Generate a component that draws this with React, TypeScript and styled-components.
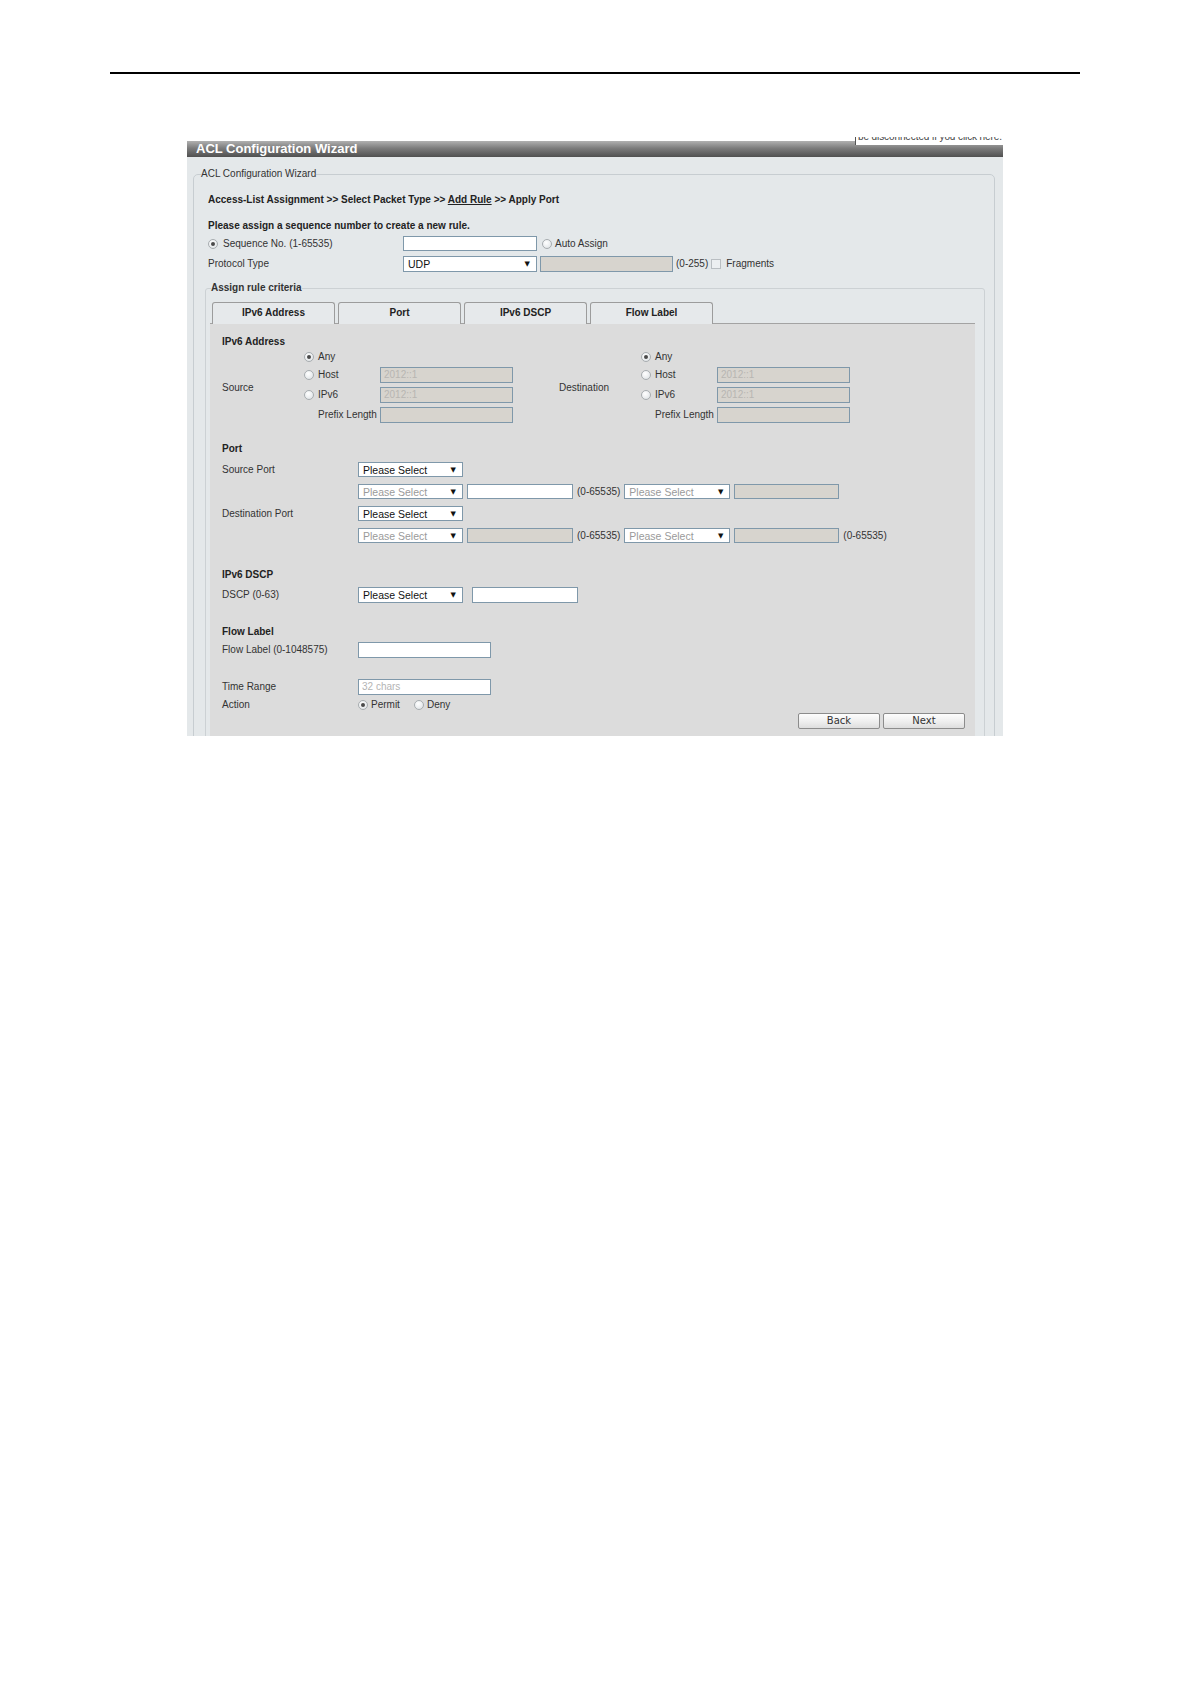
import React from "react";
import styled, { createGlobalStyle } from "styled-components";

const GlobalStyle = createGlobalStyle`
  html, body { margin: 0; padding: 0; background: #fff; }
  body { font-family: "Liberation Sans", Arial, sans-serif; color: #333; }
  * { box-sizing: border-box; }
`;

const Page = styled.div`
  width: 1191px;
  height: 1684px;
  padding-top: 72px;
  background: #fff;
  overflow: hidden;
`;

const HeaderRule = styled.div`
  margin-left: 110px;
  width: 970px;
  height: 2px;
  background: #000;
`;

const Window = styled.div`
  position: relative;
  margin: 63px 0 0 187px;
  width: 816px;
  height: 599px;
  padding-top: 4px;
  overflow: hidden;
  background: #fff;
  display: flex;
  flex-direction: column;
`;

const Note = styled.div`
  position: absolute;
  top: 0;
  right: 0;
  width: 148px;
  height: 8px;
  overflow: hidden;
  background: #fff;
  border-left: 1px solid #555;
  font-size: 10px;
  line-height: 12px;
  letter-spacing: -0.1px;
  color: #444;
  padding-left: 2px;
  white-space: nowrap;
  span { display: block; margin-top: -6px; }
`;

const TitleBar = styled.div`
  flex: none;
  height: 16px;
  padding-left: 9px;
  background: linear-gradient(to bottom, #b0b0b0 0%, #7c7c7c 45%, #505050 100%);
  color: #fff;
  font-weight: bold;
  font-size: 13px;
  line-height: 16px;
  white-space: nowrap;
`;

const Body = styled.div`
  flex: 1;
  min-height: 0;
  background: #e4e8ea;
  padding: 10px 8px 0 6px;
`;

const OuterFieldset = styled.fieldset`
  margin: 0;
  min-width: 0;
  height: 700px;
  border: 1px solid #c7cdd1;
  border-radius: 5px;
  padding: 0 9px 0 7px;
`;

const Legend = styled.legend<{ $indent?: number }>`
  margin: 0 0 0 ${(p) => p.$indent ?? 0}px;
  padding: 0;
  font-size: 10px;
  line-height: 14px;
  color: #333;
  white-space: nowrap;
`;

const BoldLegend = styled(Legend)`
  font-weight: bold;
`;

const Line = styled.div<{ $top?: number; $bold?: boolean }>`
  margin-top: ${(p) => p.$top ?? 0}px;
  padding-left: 7px;
  font-size: 10px;
  line-height: 14px;
  font-weight: ${(p) => (p.$bold ? "bold" : "normal")};
  color: #222;
  white-space: nowrap;
  u { text-decoration: underline; }
`;

const TopRow = styled.div<{ $top: number; $h: number }>`
  margin-top: ${(p) => p.$top}px;
  padding-left: 7px;
  height: ${(p) => p.$h}px;
  display: grid;
  grid-template-columns: 195px auto;
  align-items: center;
`;

const Inline = styled.div<{ $gap?: number }>`
  display: flex;
  align-items: center;
  gap: ${(p) => p.$gap ?? 3}px;
  height: 100%;
`;

const Text = styled.span<{ $shift?: number }>`
  margin-left: ${(p) => p.$shift ?? 0}px;
  font-size: 10px;
  line-height: 14px;
  color: #333;
  white-space: nowrap;
`;

const RadioWrap = styled.span<{ $gap?: number }>`
  display: inline-flex;
  align-items: center;
  gap: ${(p) => p.$gap ?? 4}px;
  font-size: 10px;
  line-height: 14px;
  color: #333;
  white-space: nowrap;
`;

const RadioDot = styled.span<{ $on?: boolean }>`
  flex: none;
  width: 10px;
  height: 10px;
  border-radius: 50%;
  border: 1px solid #a8adb0;
  background: radial-gradient(circle at 40% 35%, #ffffff 0%, #e9ecee 60%, #d6dadd 100%);
  display: flex;
  align-items: center;
  justify-content: center;
  &::after {
    content: "";
    width: 4px;
    height: 4px;
    border-radius: 50%;
    background: ${(p) => (p.$on ? "#4a4a4a" : "transparent")};
  }
`;

const Check = styled.span`
  flex: none;
  width: 10px;
  height: 10px;
  border: 1px solid #b9bec2;
  background: #eceff1;
`;

const Field = styled.div<{ $w: number; $h?: number; $disabled?: boolean; $ph?: boolean }>`
  flex: none;
  width: ${(p) => p.$w}px;
  height: ${(p) => p.$h ?? 16}px;
  border: 1px solid #7f98aa;
  background: ${(p) => (p.$disabled ? "#d7d4ce" : "#fff")};
  font-size: 10px;
  line-height: ${(p) => (p.$h ?? 16) - 2}px;
  padding-left: 3px;
  color: ${(p) => (p.$ph ? "#b4b4b4" : p.$disabled ? "#b8b6b2" : "#222")};
  white-space: nowrap;
  overflow: hidden;
`;

const SelectBox = styled.div<{ $w: number; $h?: number; $dim?: boolean }>`
  flex: none;
  width: ${(p) => p.$w}px;
  height: ${(p) => p.$h ?? 16}px;
  border: 1px solid #7f98aa;
  background: #fff;
  display: flex;
  align-items: center;
  justify-content: space-between;
  padding: 0 6px 0 4px;
  font-size: 10.5px;
  color: ${(p) => (p.$dim ? "#9a9a9a" : "#111")};
  white-space: nowrap;
`;

const Arrow = styled.span`
  font-family: "DejaVu Sans", sans-serif;
  font-size: 7px;
  color: #111;
`;

const InnerFieldset = styled.fieldset`
  margin: 9px 0 0 4px;
  min-width: 0;
  height: 600px;
  border: 1px solid #ccd1d4;
  border-radius: 3px;
  padding: 0 9px 0 4px;
`;

const TabBar = styled.div`
  margin-top: 7px;
  padding-left: 2px;
  display: flex;
  gap: 3px;
  height: 22px;
  border-bottom: 1px solid #a3a3a3;
`;

const Tab = styled.div`
  width: 123px;
  height: 22px;
  border: 1px solid #9c9c9c;
  border-bottom: none;
  border-radius: 3px 3px 0 0;
  background: #e6e9eb;
  font-size: 10px;
  font-weight: bold;
  line-height: 20px;
  text-align: center;
  color: #222;
`;

const Panel = styled.div`
  background: #dcdcdc;
  padding: 11px 10px 40px 12px;
  height: 480px;
`;

const SectionTitle = styled.div<{ $top?: number }>`
  margin-top: ${(p) => p.$top ?? 0}px;
  font-size: 10px;
  font-weight: bold;
  line-height: 14px;
  color: #222;
`;

const AddrRow = styled.div`
  margin-top: 2px;
  display: flex;
  gap: 46px;
`;

const AddrBlock = styled.div`
  display: grid;
  grid-template-columns: 82px 76px 133px;
  grid-template-rows: 12px 16px 16px 16px;
  row-gap: 4px;
  align-items: center;
`;

const SideLabel = styled.span`
  grid-column: 1;
  grid-row: 1 / span 4;
  font-size: 10px;
  color: #333;
`;

const Cell = styled.div<{ $col: number; $row: number; $indent?: number }>`
  grid-column: ${(p) => p.$col};
  grid-row: ${(p) => p.$row};
  padding-left: ${(p) => p.$indent ?? 0}px;
  display: flex;
  align-items: center;
`;

const FormGrid = styled.div<{ $top: number; $gap?: number; $row?: number }>`
  margin-top: ${(p) => p.$top}px;
  display: grid;
  grid-template-columns: 136px auto;
  grid-auto-rows: ${(p) => p.$row ?? 16}px;
  row-gap: ${(p) => p.$gap ?? 7}px;
  align-items: center;
`;

const Actions = styled.div`
  margin-top: 0;
  display: flex;
  justify-content: flex-end;
  gap: 3px;
`;

const Button = styled.button`
  width: 82px;
  height: 16px;
  padding: 0;
  border: 1px solid #8c8c8c;
  border-radius: 2px;
  background: linear-gradient(to bottom, #fdfdfd 0%, #eeeeee 55%, #dedede 100%);
  font-family: "DejaVu Sans", sans-serif;
  font-size: 10px;
  line-height: 14px;
  color: #333;
`;

const Radio = ({ on, label, gap }: { on?: boolean; label: string; gap?: number }) => (
  <RadioWrap $gap={gap}>
    <RadioDot $on={on} />
    {label}
  </RadioWrap>
);

const Select = ({ w, dim, label = "Please Select", h }: { w: number; dim?: boolean; label?: string; h?: number }) => (
  <SelectBox $w={w} $dim={dim} $h={h}>
    <span>{label}</span>
    <Arrow>▼</Arrow>
  </SelectBox>
);

const AddressBlock = ({ side }: { side: string }) => (
  <AddrBlock>
    <SideLabel>{side}</SideLabel>
    <Cell $col={2} $row={1}>
      <Radio on label="Any" />
    </Cell>
    <Cell $col={2} $row={2}>
      <Radio label="Host" />
    </Cell>
    <Cell $col={3} $row={2}>
      <Field $w={133} $disabled>2012::1</Field>
    </Cell>
    <Cell $col={2} $row={3}>
      <Radio label="IPv6" />
    </Cell>
    <Cell $col={3} $row={3}>
      <Field $w={133} $disabled>2012::1</Field>
    </Cell>
    <Cell $col={2} $row={4} $indent={14}>
      <Text>Prefix Length</Text>
    </Cell>
    <Cell $col={3} $row={4}>
      <Field $w={133} $disabled />
    </Cell>
  </AddrBlock>
);

export default function App() {
  return (
    <Page>
      <GlobalStyle />
      <HeaderRule />
      <Window>
        <Note>
          <span>be disconnected if you click here.</span>
        </Note>
        <TitleBar>ACL Configuration Wizard</TitleBar>
        <Body>
          <OuterFieldset>
            <Legend>ACL Configuration Wizard</Legend>
            <Line $top={12} $bold>
              Access-List Assignment &gt;&gt; Select Packet Type &gt;&gt; <u>Add Rule</u> &gt;&gt; Apply Port
            </Line>
            <Line $top={12} $bold>
              Please assign a sequence number to create a new rule.
            </Line>
            <TopRow $top={3} $h={15}>
              <Radio on gap={5} label="Sequence No. (1-65535)" />
              <Inline $gap={5}>
                <Field $w={134} $h={15} />
                <Radio gap={3} label="Auto Assign" />
              </Inline>
            </TopRow>
            <TopRow $top={5} $h={16}>
              <Text>Protocol Type</Text>
              <Inline $gap={3}>
                <Select w={134} label="UDP" />
                <Field $w={133} $disabled />
                <Text>(0-255)</Text>
                <Check />
                <Text $shift={2}>Fragments</Text>
              </Inline>
            </TopRow>
            <InnerFieldset>
              <BoldLegend $indent={1}>Assign rule criteria</BoldLegend>
              <TabBar>
                <Tab>IPv6 Address</Tab>
                <Tab>Port</Tab>
                <Tab>IPv6 DSCP</Tab>
                <Tab>Flow Label</Tab>
              </TabBar>
              <Panel>
                <SectionTitle>IPv6 Address</SectionTitle>
                <AddrRow>
                  <AddressBlock side="Source" />
                  <AddressBlock side="Destination" />
                </AddrRow>

                <SectionTitle $top={19}>Port</SectionTitle>
                <FormGrid $top={6} $row={15} $gap={7}>
                  <Text>Source Port</Text>
                  <Inline>
                    <Select w={105} h={15} />
                  </Inline>
                  <span />
                  <Inline $gap={4}>
                    <Select w={105} h={15} dim />
                    <Field $w={106} $h={15} />
                    <Text>(0-65535)</Text>
                    <Select w={106} h={15} dim />
                    <Field $w={105} $h={15} $disabled />
                  </Inline>
                  <Text>Destination Port</Text>
                  <Inline>
                    <Select w={105} h={15} />
                  </Inline>
                  <span />
                  <Inline $gap={4}>
                    <Select w={105} h={15} dim />
                    <Field $w={106} $h={15} $disabled />
                    <Text>(0-65535)</Text>
                    <Select w={106} h={15} dim />
                    <Field $w={105} $h={15} $disabled />
                    <Text>(0-65535)</Text>
                  </Inline>
                </FormGrid>

                <SectionTitle $top={25}>IPv6 DSCP</SectionTitle>
                <FormGrid $top={5}>
                  <Text>DSCP (0-63)</Text>
                  <Inline $gap={9}>
                    <Select w={105} />
                    <Field $w={106} />
                  </Inline>
                </FormGrid>

                <SectionTitle $top={22}>Flow Label</SectionTitle>
                <FormGrid $top={3}>
                  <Text>Flow Label (0-1048575)</Text>
                  <Inline>
                    <Field $w={133} />
                  </Inline>
                </FormGrid>

                <FormGrid $top={21} $gap={2}>
                  <Text>Time Range</Text>
                  <Inline>
                    <Field $w={133} $ph>32 chars</Field>
                  </Inline>
                  <Text>Action</Text>
                  <Inline $gap={14}>
                    <Radio on gap={3} label="Permit" />
                    <Radio gap={3} label="Deny" />
                  </Inline>
                </FormGrid>

                <Actions>
                  <Button>Back</Button>
                  <Button>Next</Button>
                </Actions>
              </Panel>
            </InnerFieldset>
          </OuterFieldset>
        </Body>
      </Window>
    </Page>
  );
}
